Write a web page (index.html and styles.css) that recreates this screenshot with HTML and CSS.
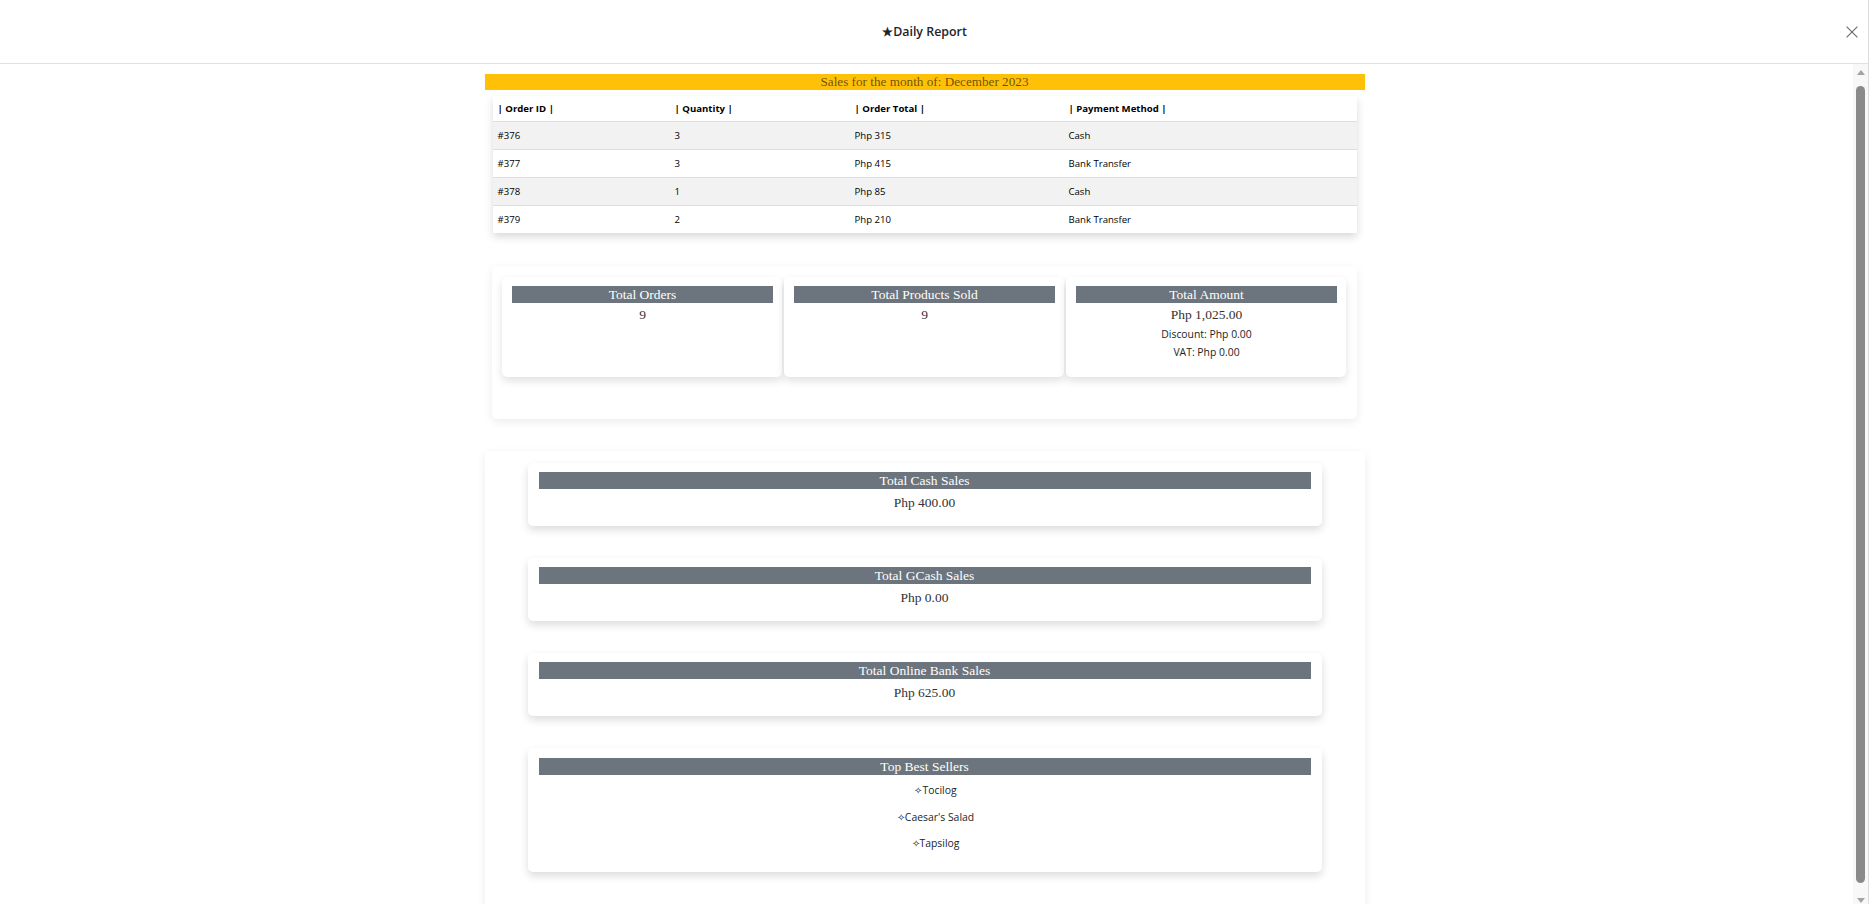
FILE: index.html
```html
<!DOCTYPE html>
<html lang="en">
<head>
<meta charset="utf-8">
<title>Daily Report</title>
<link rel="stylesheet" href="styles.css">
</head>
<body>
<div class="modal">
  <header class="modal-header">
    <span class="spacer"></span>
    <h1 class="modal-title">★Daily Report</h1>
    <button class="close-btn" aria-label="Close">
      <svg width="12" height="12" viewBox="0 0 12 12"><path d="M0.6 0.6L11.4 11.4M11.4 0.6L0.6 11.4" stroke="#6e6e6e" stroke-width="1.2" fill="none"/></svg>
    </button>
  </header>
  <div class="modal-main">
    <main class="modal-body">
      <div class="report">
        <div class="month-bar">Sales for the month of: December 2023</div>

        <table class="orders">
          <colgroup>
            <col class="c1"><col class="c2"><col class="c3"><col class="c4">
          </colgroup>
          <thead>
            <tr><th>| Order ID |</th><th>| Quantity |</th><th>| Order Total |</th><th>| Payment Method |</th></tr>
          </thead>
          <tbody>
            <tr><td>#376</td><td>3</td><td>Php 315</td><td>Cash</td></tr>
            <tr><td>#377</td><td>3</td><td>Php 415</td><td>Bank Transfer</td></tr>
            <tr><td>#378</td><td>1</td><td>Php 85</td><td>Cash</td></tr>
            <tr><td>#379</td><td>2</td><td>Php 210</td><td>Bank Transfer</td></tr>
          </tbody>
        </table>

        <section class="stats-card">
          <div class="stats-row">
            <div class="stat">
              <div class="label">Total Orders</div>
              <div class="value">9</div>
            </div>
            <div class="stat">
              <div class="label">Total Products Sold</div>
              <div class="value">9</div>
            </div>
            <div class="stat">
              <div class="label">Total Amount</div>
              <div class="value">Php 1,025.00</div>
              <div class="sub">Discount: Php 0.00</div>
              <div class="sub">VAT: Php 0.00</div>
            </div>
          </div>
        </section>

        <section class="payments-card">
          <div class="pay">
            <div class="label">Total Cash Sales</div>
            <div class="pay-value">Php 400.00</div>
          </div>
          <div class="pay">
            <div class="label">Total GCash Sales</div>
            <div class="pay-value">Php 0.00</div>
          </div>
          <div class="pay">
            <div class="label">Total Online Bank Sales</div>
            <div class="pay-value">Php 625.00</div>
          </div>
          <div class="pay best">
            <div class="label">Top Best Sellers</div>
            <ul class="sellers">
              <li>✧Tocilog</li>
              <li>✧Caesar's Salad</li>
              <li>✧Tapsilog</li>
            </ul>
          </div>
        </section>
      </div>
    </main>
    <div class="scrollbar" aria-hidden="true">
      <div class="sb-btn sb-up"><span class="tri-up"></span></div>
      <div class="sb-thumb"></div>
      <div class="sb-btn sb-down"><span class="tri-down"></span></div>
    </div>
  </div>
</div>
</body>
</html>
```
FILE: styles.css
```css
html, body {
  margin: 0;
  height: 100%;
  overflow: hidden;
  background: #fff;
}

.modal {
  box-sizing: border-box;
  width: calc(100% - 2px);
  height: 100vh;
  border-right: 1px solid #dcdcdc;
  display: flex;
  flex-direction: column;
  background: #fff;
}

.modal-header {
  flex: none;
  height: 63px;
  border-bottom: 1px solid #dee2e6;
  display: grid;
  grid-template-columns: 1fr auto 1fr;
  align-items: center;
}

.modal-title {
  margin: 0 19px 0 0;
  font-family: "Open Sans", "Noto Sans", sans-serif;
  font-weight: 600;
  font-size: 12.4px;
  color: #212529;
}

.close-btn {
  justify-self: end;
  margin-right: 10px;
  padding: 0;
  border: 0;
  background: none;
  display: flex;
  width: 12px;
  height: 12px;
}

.modal-main {
  flex: 1;
  min-height: 0;
  display: flex;
}

.modal-body {
  flex: 1;
  min-width: 0;
  overflow: hidden;
  padding-right: 4px;
}

/* decorative scrollbar */
.scrollbar {
  flex: none;
  width: 15px;
  background: #f8f8f8;
  display: flex;
  flex-direction: column;
  align-items: center;
}
.sb-btn {
  flex: none;
  width: 15px;
  display: flex;
  justify-content: center;
}
.sb-up {
  height: 18px;
  align-items: flex-start;
  padding-top: 6px;
  box-sizing: border-box;
}
.sb-down {
  height: 17px;
  align-items: flex-end;
  padding-bottom: 1px;
  box-sizing: border-box;
}
.tri-up,
.tri-down {
  width: 0;
  height: 0;
  border-left: 4px solid transparent;
  border-right: 4px solid transparent;
}
.tri-up {
  border-bottom: 5px solid #a3a3a3;
}
.tri-down {
  border-top: 5px solid #a3a3a3;
}
.sb-thumb {
  flex: 1;
  width: 9px;
  margin: 4px 0;
  background: #8a8a8a;
  border-radius: 5px;
}

.report {
  width: 880px;
  margin: 0 auto;
  padding: 10px 0 12px;
}

.month-bar {
  height: 16px;
  background: #ffc107;
  font-family: "Liberation Serif", serif;
  font-size: 13.2px;
  line-height: 16px;
  text-align: center;
  color: rgba(0, 0, 0, 0.6);
}

.orders {
  width: 864px;
  margin: 6px auto 0;
  border-collapse: collapse;
  background: #fff;
  box-shadow: 0 4px 8px rgba(0, 0, 0, 0.15);
  font-family: "Open Sans", "Noto Sans", sans-serif;
  font-size: 9.6px;
  color: #000;
}
.orders .c1 { width: 177px; }
.orders .c2 { width: 180px; }
.orders .c3 { width: 214px; }
.orders th,
.orders td {
  text-align: left;
  padding: 0 5px;
  border-bottom: 1px solid #dedede;
}
.orders th {
  height: 25px;
  font-weight: 700;
}
.orders td {
  height: 27px;
}
.orders tbody tr:nth-child(odd) {
  background: #f2f2f2;
}
.orders tbody tr:last-child td {
  border-bottom: 0;
  height: 27px;
}

.stats-card {
  box-sizing: border-box;
  width: 865px;
  margin: 33px auto 0;
  padding: 11px 11px 42px 10px;
  background: #fff;
  border-radius: 5px;
  box-shadow: 0 3px 10px rgba(0, 0, 0, 0.08);
}

.stats-row {
  display: grid;
  grid-template-columns: repeat(3, 1fr);
  gap: 2px;
}

.stat {
  background: #fff;
  border-radius: 5px;
  box-shadow: 0 4px 8px rgba(0, 0, 0, 0.12);
  padding: 9px 9px 16px 10px;
  text-align: center;
}

.label {
  background: #6c757d;
  color: #fff;
  font-family: "Liberation Serif", serif;
  font-size: 13.5px;
  line-height: 17px;
}

.value {
  margin-top: 2px;
  font-family: "Liberation Serif", serif;
  font-size: 13.5px;
  line-height: 20px;
  color: #333;
}

.sub {
  font-family: "Open Sans", "Noto Sans", sans-serif;
  font-size: 10.4px;
  line-height: 18px;
  color: #212529;
}

.payments-card {
  box-sizing: border-box;
  width: 880px;
  margin-top: 32px;
  padding: 12px 43px 44px;
  background: #fff;
  border-radius: 5px;
  box-shadow: 0 3px 10px rgba(0, 0, 0, 0.08);
}

.pay {
  background: #fff;
  border-radius: 5px;
  box-shadow: 0 4px 8px rgba(0, 0, 0, 0.14);
  padding: 9px 11px 14px;
  text-align: center;
}
.pay + .pay {
  margin-top: 32px;
}
.pay.best {
  padding: 10px 11px 21px;
}

.pay-value {
  margin-top: 4px;
  font-family: "Liberation Serif", serif;
  font-size: 13.5px;
  line-height: 20px;
  color: #333;
}
.pay:not(.best) {
  padding-bottom: 13px;
}

.sellers {
  list-style: none;
  margin: 7px 0 0;
  padding: 0 0 0 22px;
  font-family: "Open Sans", "Noto Sans", sans-serif;
  font-size: 10.4px;
  line-height: 16px;
  color: #212529;
}
.sellers li + li {
  margin-top: 10.5px;
}
```
